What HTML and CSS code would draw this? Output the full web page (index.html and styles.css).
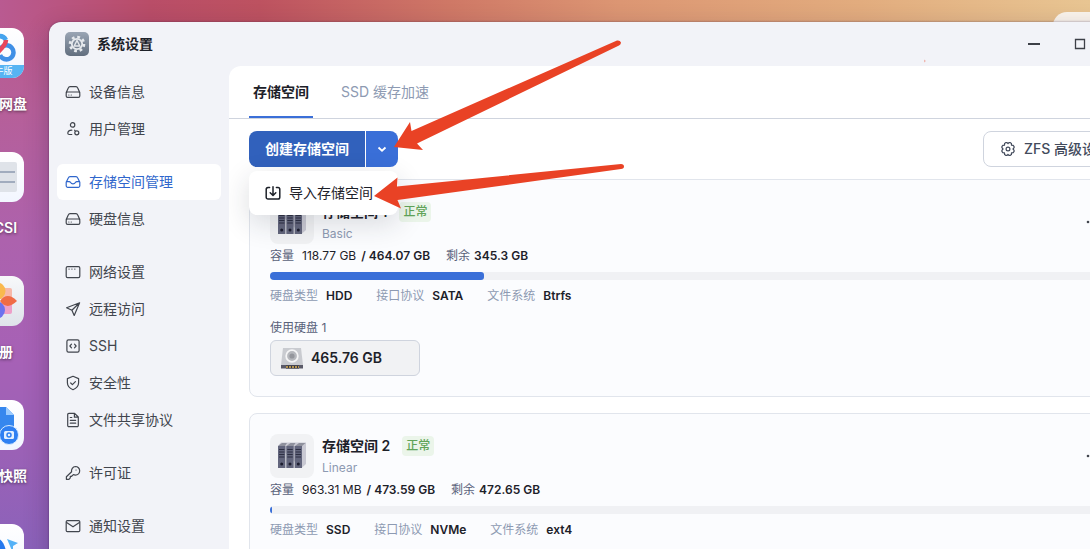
FILE: index.html
```
<!DOCTYPE html>
<html lang="zh-CN">
<head>
<meta charset="utf-8">
<title>系统设置</title>
<link rel="stylesheet" href="styles.css">
</head>
<body>
<svg class="sprite" aria-hidden="true">
  <symbol id="i-drive" viewBox="0 0 16 16"><path d="M1.2 8.6 3.4 3.7A1.8 1.8 0 0 1 5 2.6h6a1.8 1.8 0 0 1 1.600 1.100L14.800 8.600M2.600 8h10.800a1.400 1.400 0 0 1 1.400 1.400v2.600a1.400 1.400 0 0 1-1.400 1.400H2.600A1.400 1.400 0 0 1 1.200 12V9.400A1.400 1.400 0 0 1 2.600 8Z"/><path d="M3.800 11h.1M6.200 11h.1"/></symbol>
  <symbol id="i-user" viewBox="0 0 16 16"><circle cx="7.600" cy="3.900" r="2.200"/><path d="M6.800 9.200c-2.500.2-4 1.600-4 3.100 0 .8.600 1.200 1.400 1.200h2.600"/><circle cx="11.800" cy="11.800" r="2"/><path d="M9.600 9.200l.6.800"/></symbol>
  <symbol id="i-inbox" viewBox="0 0 16 16"><path d="M1.200 8.200 3.400 3.700A1.800 1.800 0 0 1 5 2.600h6a1.800 1.800 0 0 1 1.600 1.100l2.200 4.500v3.600a1.600 1.600 0 0 1-1.600 1.600H2.800a1.600 1.600 0 0 1-1.600-1.600ZM1.400 7.600h2.800c.7 0 1 .3 1.400.9.500.9 1.300 1.400 2.400 1.400s1.900-.5 2.400-1.400c.4-.6.7-.9 1.400-.9h2.800"/></symbol>
  <symbol id="i-net" viewBox="0 0 16 16"><rect x="1.200" y="2.600" width="13.600" height="11" rx="1.400"/><path d="M4 5.100h.1M6.900 5.100h.1M9.800 5.100h.1"/></symbol>
  <symbol id="i-send" viewBox="0 0 16 16"><path d="M14.600 1.800 1.600 6.700l5.300 2.600 2.300 5.100ZM6.900 9.300l7.700-7.500"/></symbol>
  <symbol id="i-code" viewBox="0 0 16 16"><rect x="1.900" y="1.900" width="12.200" height="12.200" rx="1.600"/><path d="M6.500 6.200 4.900 8l1.600 1.800M9.500 6.200 11.100 8 9.500 9.800"/></symbol>
  <symbol id="i-shield" viewBox="0 0 16 16"><path d="M8 1.300 13.600 3.600v4.200c0 3.400-2.200 5.500-5.600 6.900-3.400-1.400-5.600-3.500-5.600-6.900V3.600ZM5.700 8l1.700 1.600 3-3"/></symbol>
  <symbol id="i-doc" viewBox="0 0 16 16"><path d="M9.600 1.300H3.900a1.200 1.200 0 0 0-1.200 1.200v11a1.200 1.200 0 0 0 1.200 1.200h8.200a1.200 1.200 0 0 0 1.200-1.200V5ZM9.400 1.500v3.700h3.700M5.300 8.300h5.400M5.300 11.200h5.400M5.300 5.500h1.500"/></symbol>
  <symbol id="i-key" viewBox="0 0 16 16"><path d="M10.400 1.500a4.300 4.300 0 0 1 0 8.600c-.8 0-1.500-.2-2-.5L6.600 11.300H5.300v1.500L3.900 14.300H1.400v-2.600L6.600 6.800a4.300 4.300 0 0 1 3.800-5.300ZM11 5h.1"/></symbol>
  <symbol id="i-mail" viewBox="0 0 16 16"><rect x="1.200" y="2.600" width="13.600" height="11" rx="1.200"/><path d="m1.600 4.600 6.400 4.200 6.400-4.200"/></symbol>
  <symbol id="i-import" viewBox="0 0 16 16"><path d="M4.600 2.600H3A1.800 1.800 0 0 0 1.200 4.400v7.800A1.800 1.800 0 0 0 3 14h10a1.800 1.800 0 0 0 1.800-1.800V4.400A1.800 1.800 0 0 0 13 2.600h-1.600M8 1.800v8.400M5.200 7.700 8 10.500l2.800-2.800"/></symbol>
  <symbol id="i-gear" viewBox="0 0 16 16"><path d="M5.900 1.600h1.200L8 2.700l.9-1.100h1.200l1.300.8.100 1.700 1.700.3.900 1.200v1.100L13 8l1.100 1.300v1.100l-.9 1.200-1.700.3-.1 1.700-1.300.8H8.900L8 13.300l-.9 1.100H5.900l-1.300-.8-.1-1.700-1.700-.3-.9-1.200V9.300L3 8 1.900 6.700V5.600l.9-1.200 1.700-.3.1-1.700Z"/><circle cx="8" cy="8" r="1.900"/></symbol>
  <symbol id="i-server" viewBox="0 0 32 32">
    <path d="M2 6 5 2.500h25V24L25.500 28Z" fill="#c9c9d3"/>
    <path d="M2 6 6 3h5L9 6ZM10.500 6l4-3h5l-2 3ZM19 6l4-3h6.500L26 6Z" fill="#8f919d"/>
    <path d="M2 6h7.400v22H2ZM10.300 6h7.400v22h-7.400ZM18.600 6H26v22h-7.400Z" fill="#62657c"/>
    <path d="M3 9.500h5.400M3 12h5.400M3 14.500h5.400M3 17h5.400M11.300 9.500h5.400M11.300 12h5.400M11.300 14.500h5.400M11.300 17h5.400M19.600 9.500H25M19.600 12H25M19.600 14.500H25M19.600 17H25" stroke="#2d2f42" stroke-width="1.200"/>
    <g fill="#1c1d2e"><circle cx="5.700" cy="24" r="1.500"/><circle cx="14" cy="24" r="1.500"/><circle cx="22.300" cy="24" r="1.500"/></g>
  </symbol>
</svg>

<div class="desktop">
  <div class="widget"></div>
  <div class="shortcuts">
    <a class="shortcut" href="#"><span class="tile">
      <svg viewBox="0 0 50 50"><rect y="37" width="50" height="13" fill="#56b4f3"/><g fill="none" stroke-width="4.500"><path d="M18 15a7.500 7.500 0 0 1 14-3" stroke="#45a4ee"/><path d="M27 20a7 7 0 1 1-1 7" stroke="#3f8fe6"/><path d="M32 12c0 5-5 9-9 13-3 4-8 6-12 4" stroke="#e8475c"/></g></svg>
      <span class="ribbon">飞牛版</span></span>百度网盘</a>
    <a class="shortcut" href="#"><span class="tile">
      <svg viewBox="0 0 50 50"><rect x="7" y="10" width="36" height="30" rx="2" fill="#dfe3e9"/><path d="M7 20h34M7 30h34" stroke="#8d9bb0" stroke-width="1.500"/></svg></span>iSCSI</a>
    <a class="shortcut" href="#"><span class="tile tile-grey">
      <svg viewBox="0 0 50 50"><rect x="27" y="12" width="11" height="12" rx="2" fill="#f7b8a9"/><rect x="27" y="26" width="11" height="12" rx="2" fill="#ee9fc8"/><circle cx="23" cy="15" r="8.500" fill="#f9b94e"/><circle cx="22" cy="34" r="9" fill="#6c72ee"/><path d="M26 25c5-7 11-6 17 0-6 6-12 7-17 0Z" fill="#f06c46"/></svg></span>相册</a>
    <a class="shortcut" href="#"><span class="tile">
      <svg viewBox="0 0 50 50"><path d="M12 7h20l8 8v23H12Z" fill="#3687ee"/><path d="M32 7v8h8Z" fill="#9bcbff"/><circle cx="35" cy="35" r="9.500" fill="#2f80f2" stroke="#d9ebff"/><rect x="30" y="31" width="10" height="8" rx="1.500" fill="#e3f0ff"/><circle cx="35" cy="35" r="2" fill="none" stroke="#2f80f2" stroke-width="1.500"/></svg></span>文件快照</a>
    <a class="shortcut" href="#"><span class="tile">
      <svg viewBox="0 0 50 50"><path d="M14 12c10-1 18 6 18 18H18Z" fill="#2378ee"/><path d="m33 15 11 4-5 3v7Z" fill="#55b2f7"/></svg></span>迅雷</a>
  </div>

  <div class="window">
    <header class="titlebar">
      <svg class="app-icon" viewBox="0 0 24 24"><defs><linearGradient id="g" x2="0" y2="1"><stop stop-color="#9aa5b4"/><stop offset="1" stop-color="#626e7e"/></linearGradient></defs><rect width="24" height="24" rx="5" fill="url(#g)"/><circle cx="12" cy="12" r="7" fill="none" stroke="#e6e9ed" stroke-width="2.600" stroke-dasharray="2.750 2.750"/><circle cx="12" cy="12" r="5.200" fill="none" stroke="#e6e9ed" stroke-width="1.800"/><path d="M12 8.500 14.800 14H9.200Z" fill="none" stroke="#e6e9ed" stroke-width="1.400"/></svg>
      <h1>系统设置</h1>
      <div class="controls">
        <button aria-label="最小化"><svg viewBox="0 0 14 14"><path d="M1 7h12" stroke-width="2"/></svg></button>
        <button aria-label="最大化"><svg viewBox="0 0 14 14"><path d="M2.500 2.500h9v9h-9Z" stroke-width="1.300"/></svg></button>
        <button aria-label="关闭"><svg viewBox="0 0 14 14"><path d="m2 2 10 10M12 2 2 12"/></svg></button>
      </div>
    </header>
    <div class="layout">
      <nav class="sidebar">
        <div class="group">
          <a href="#"><svg><use href="#i-drive"/></svg>设备信息</a>
          <a href="#"><svg><use href="#i-user"/></svg>用户管理</a>
        </div>
        <div class="group">
          <a href="#" class="active"><svg><use href="#i-inbox"/></svg>存储空间管理</a>
          <a href="#"><svg><use href="#i-drive"/></svg>硬盘信息</a>
        </div>
        <div class="group">
          <a href="#"><svg><use href="#i-net"/></svg>网络设置</a>
          <a href="#"><svg><use href="#i-send"/></svg>远程访问</a>
          <a href="#"><svg><use href="#i-code"/></svg>SSH</a>
          <a href="#"><svg><use href="#i-shield"/></svg>安全性</a>
          <a href="#"><svg><use href="#i-doc"/></svg>文件共享协议</a>
        </div>
        <div class="group">
          <a href="#"><svg><use href="#i-key"/></svg>许可证</a>
        </div>
        <div class="group">
          <a href="#"><svg><use href="#i-mail"/></svg>通知设置</a>
        </div>
      </nav>
      <main class="panel">
        <div class="tabs">
          <button class="tab selected">存储空间</button>
          <button class="tab">SSD 缓存加速</button>
        </div>
        <div class="toolbar">
          <div class="split">
            <button class="create">创建存储空间</button>
            <button class="more" aria-label="更多"><svg viewBox="0 0 12 12"><path d="m2.500 4.500 3.500 3.200 3.500-3.200"/></svg></button>
            <div class="menu">
              <button><svg><use href="#i-import"/></svg>导入存储空间</button>
            </div>
          </div>
          <button class="zfs"><svg><use href="#i-gear"/></svg>ZFS 高级设置</button>
        </div>
        <div class="cards">
          <section class="card">
            <div class="card-head">
              <svg class="pool"><use href="#i-server" x="6" y="6" width="32" height="32"/></svg>
              <div class="names">
                <div class="name"><h2>存储空间 1</h2><span class="badge">正常</span></div>
                <p>Basic</p>
              </div>
              <button class="dots" aria-label="操作"><svg viewBox="0 0 20 4"><circle cx="2" cy="2" r="1.300"/><circle cx="8" cy="2" r="1.300"/><circle cx="14" cy="2" r="1.300"/></svg></button>
            </div>
            <div class="capacity">
              <span class="pair"><span>容量</span><span class="value"><span class="used">118.77 GB</span> / 464.07 GB</span></span>
              <span class="pair tight"><span>剩余</span><span class="value">345.3 GB</span></span>
            </div>
            <div class="bar"><div class="fill" style="width:25.6%"></div></div>
            <dl class="specs">
              <div><dt>硬盘类型</dt><dd>HDD</dd></div>
              <div><dt>接口协议</dt><dd>SATA</dd></div>
              <div><dt>文件系统</dt><dd>Btrfs</dd></div>
            </dl>
            <p class="disk-label">使用硬盘 1</p>
            <div class="disk">
              <svg viewBox="0 0 22 22"><path d="M2 1h18l2 17H0Z" fill="#c9cbd0"/><path d="M0 18h22v3.500H0Z" fill="#5a5a68"/><path d="M5 18.500h13v3H5Z" fill="#353541"/><path d="M5 20h13" stroke="#b39350" stroke-width="2" stroke-dasharray="2 1"/><circle cx="11" cy="9" r="5.800" fill="#b6b8bd" stroke="#f5f5f6" stroke-width="1.800"/><circle cx="11" cy="9" r="2.600" fill="#94969c"/></svg>
              465.76 GB
            </div>
          </section>
          <section class="card">
            <div class="card-head">
              <svg class="pool"><use href="#i-server" x="6" y="6" width="32" height="32"/></svg>
              <div class="names">
                <div class="name"><h2>存储空间 2</h2><span class="badge">正常</span></div>
                <p>Linear</p>
              </div>
              <button class="dots" aria-label="操作"><svg viewBox="0 0 20 4"><circle cx="2" cy="2" r="1.300"/><circle cx="8" cy="2" r="1.300"/><circle cx="14" cy="2" r="1.300"/></svg></button>
            </div>
            <div class="capacity">
              <span class="pair"><span>容量</span><span class="value"><span class="used">963.31 MB</span> / 473.59 GB</span></span>
              <span class="pair tight"><span>剩余</span><span class="value">472.65 GB</span></span>
            </div>
            <div class="bar"><div class="fill" style="width:0.2%"></div></div>
            <dl class="specs">
              <div><dt>硬盘类型</dt><dd>SSD</dd></div>
              <div><dt>接口协议</dt><dd>NVMe</dd></div>
              <div><dt>文件系统</dt><dd>ext4</dd></div>
            </dl>
          </section>
        </div>
      </main>
    </div>
  </div>

  <svg class="annotations" aria-hidden="true">
    <path d="M394 147 410 122 411.500 131 617 40.500Q620 40 621 42.500 621 44.500 619 45.500L417 143.500 423 150Z"/>
    <path d="M374 196 397.500 177.500 397 186.500 621 164Q624 164 624 166.500 624 168.500 621 169L397.500 200 401 208.500Z"/>
    <path d="m924 59.500 2 1.500-2 1.500Z" opacity=".35"/>
  </svg>
</div>
</body>
</html>
```
FILE: styles.css
```
* { box-sizing: border-box; margin: 0; padding: 0; }

body {
  font-family: Inter, "Noto Sans CJK SC", sans-serif;
  font-size: 14px;
  line-height: 20px;
  color: #1d2129;
  overflow: hidden;
}

button { font: inherit; color: inherit; border: 0; background: none; cursor: pointer; }
a { color: inherit; text-decoration: none; }
svg { display: block; flex: none; }
.sprite { position: absolute; width: 0; height: 0; }

.desktop {
  position: relative;
  height: 100vh;
  overflow: hidden;
  background:
    linear-gradient(to bottom, transparent 20px, #b65f99 110px, #ad62ad 240px, #a661b6 360px, #9b61b6 450px, #8b62ba),
    linear-gradient(to right, #b95a91, #b94d68 150px, #bd5260 260px, #cf7866 450px, #dc9673 620px, #e2ac7e 860px, #e8c592 1090px);
}

.widget {
  position: absolute;
  top: 12px;
  right: -60px;
  width: 97px;
  height: 60px;
  border-radius: 14px;
  background: #fbf5ec;
}

.shortcuts {
  position: absolute;
  top: 28px;
  left: -57px;
  width: 112px;
  display: flex;
  flex-direction: column;
  gap: 38px;
}

.shortcut {
  display: flex;
  flex-direction: column;
  align-items: center;
  gap: 16px;
  color: #fff;
  font-weight: 600;
  text-shadow: 0 1px 3px rgba(0, 0, 0, .5);
}

.tile {
  position: relative;
  width: 50px;
  height: 50px;
  border-radius: 12px;
  overflow: hidden;
  background: linear-gradient(#fff, #f2f6ff);
}

.tile-grey { background: linear-gradient(#f7f8fa, #dfe4ea); }

.ribbon {
  position: absolute;
  right: 0;
  bottom: 0;
  left: 0;
  font-size: 9px;
  font-weight: 400;
  line-height: 14px;
  text-align: center;
  text-shadow: none;
}

.window {
  position: absolute;
  top: 22px;
  right: -58px;
  bottom: -60px;
  left: 49px;
  display: flex;
  flex-direction: column;
  border-radius: 12px;
  overflow: hidden;
  background: #f2f3f8;
  box-shadow: 0 0 2px rgba(40, 20, 60, .5), 0 8px 24px rgba(40, 20, 60, .3);
}

.titlebar {
  display: flex;
  align-items: center;
  gap: 8px;
  height: 44px;
  flex: none;
  padding: 0 15px 0 16px;
}

.titlebar h1 { font-size: 14px; font-weight: 600; }
.app-icon { width: 24px; height: 24px; }
.controls { display: flex; gap: 32px; margin-left: auto; }
.controls svg { width: 14px; height: 14px; fill: none; stroke: #3d4047; stroke-width: 1.300; }

.layout { display: flex; flex: 1; min-height: 0; }

.sidebar {
  width: 180px;
  flex: none;
  display: flex;
  flex-direction: column;
  gap: 17px;
  padding: 8px;
  color: #41454d;
}

.group { display: flex; flex-direction: column; gap: 1px; }

.sidebar a {
  display: flex;
  align-items: center;
  gap: 8px;
  height: 36px;
  padding: 0 8px;
  border-radius: 6px;
}

.sidebar svg, .menu svg, .zfs svg {
  width: 16px;
  height: 16px;
  fill: none;
  stroke: currentColor;
  stroke-width: 1.200;
  stroke-linecap: round;
  stroke-linejoin: round;
}

.sidebar .active { background: #fff; color: #2f66cc; }

.panel {
  flex: 1;
  min-width: 0;
  overflow: hidden;
  border-top-left-radius: 12px;
  background: #fff;
}

.tabs {
  display: flex;
  gap: 24px;
  height: 53px;
  padding: 0 20px;
  border-bottom: 1px solid #cfd4de;
}

.tab { padding: 0 4px; color: #8d9ab2; border-bottom: 2px solid transparent; border-top: 2px solid transparent; }
.selected { color: #1d2129; font-weight: 600; border-bottom-color: #3a6fd8; }

.toolbar {
  display: flex;
  justify-content: space-between;
  padding: 12px 21px 12px 20px;
}

.split { position: relative; display: flex; gap: 1px; height: 36px; color: #fff; }
.create { padding: 0 16px; border-radius: 8px 0 0 8px; background: #3161bc; font-weight: 600; }
.more { width: 32px; display: grid; place-items: center; border-radius: 0 8px 8px 0; background: #3a6fd8; }
.more svg { width: 12px; height: 12px; fill: none; stroke: #fff; stroke-width: 1.800; }

.menu {
  position: absolute;
  z-index: 1;
  top: 40px;
  left: 0;
  right: 0;
  border-radius: 8px;
  background: #fff;
  color: #1d2129;
  box-shadow: 0 8px 28px rgba(30, 35, 50, .16);
}

.menu button { display: flex; align-items: center; gap: 8px; height: 44px; padding: 0 16px; white-space: nowrap; }
.menu svg { stroke-width: 1.500; }

.zfs {
  display: flex;
  align-items: center;
  gap: 8px;
  height: 36px;
  padding: 0 16px;
  border: 1px solid #cfd4de;
  border-radius: 8px;
  color: #434b5c;
  font-weight: 500;
}

.cards { display: flex; flex-direction: column; gap: 16px; padding: 0 21px 20px 20px; }

.card {
  padding: 20px;
  border: 1px solid #e1e5ec;
  border-radius: 8px;
  background: #fbfcfe;
  font-size: 12px;
  line-height: 24px;
}

.card-head { display: flex; gap: 8px; }
.pool { width: 44px; height: 44px; border-radius: 8px; background: #f1f2f4; }
.names { line-height: 20px; color: #8d9ab2; }
.name { display: flex; align-items: center; gap: 12px; height: 24px; }
.name h2 { font-size: 14px; font-weight: 600; color: #1d2129; }
.badge { padding: 0 4px; border-radius: 4px; background: #ebf5ea; color: #61a459; font-weight: 500; }
.dots { margin-left: auto; }
.dots svg { width: 20px; height: 4px; fill: #41454d; }

.capacity { display: flex; gap: 16px; color: #59627a; }
.pair { display: flex; gap: 8px; }
.tight { gap: 4px; }
.value { color: #1d2129; font-weight: 600; }
.used { margin-right: 2px; font-weight: 400; }

.bar { height: 8px; margin: 4px 0; border-radius: 4px; overflow: hidden; background: #f0f1f4; }
.fill { height: 100%; border-radius: 0 3px 3px 0; background: #3a6fd8; }

.specs { display: flex; gap: 24px; }
.specs div { display: flex; gap: 8px; }
.specs dt { color: #8d9ab2; }
.specs dd { font-weight: 600; }

.disk-label { margin-top: 8px; color: #59627a; }

.disk {
  display: flex;
  align-items: center;
  gap: 8px;
  width: 150px;
  height: 36px;
  padding: 0 10px;
  border: 1px solid #cfd4de;
  border-radius: 6px;
  background: #f1f2f4;
  font-size: 14px;
  font-weight: 600;
}

.disk svg { width: 22px; height: 22px; }

.annotations {
  position: absolute;
  inset: 0;
  z-index: 2;
  width: 100%;
  height: 100%;
  fill: #e94225;
  pointer-events: none;
}
```
